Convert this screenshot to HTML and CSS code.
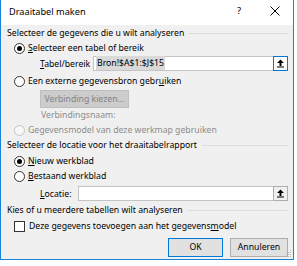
FILE: index.html
```html
<!DOCTYPE html>
<html lang="nl">
<head>
<meta charset="utf-8">
<title>Draaitabel maken</title>
<link rel="stylesheet" href="styles.css">
</head>
<body>
<div class="window">
  <div class="titlebar">
    <span class="title">Draaitabel maken</span>
    <span class="tb-btn help">?</span>
    <span class="tb-btn close"><svg width="10" height="10" viewBox="0 0 10 10"><path d="M0.5 0.5L9.5 9.5M9.5 0.5L0.5 9.5" stroke="#000" stroke-width="1"/></svg></span>
  </div>
  <div class="content">
    <div class="group-head h1"><span>Selecteer de gegevens die u wilt analyseren</span><i class="rule"></i></div>
    <div class="opt"><span class="radio checked"></span><span><u>S</u>electeer een tabel of bereik</span></div>
    <div class="field">
      <span class="flabel w-tabel"><u>T</u>abel/bereik</span>
      <div class="input"><span class="val"><span class="sel">Bron!$A$1:$J$15</span></span><span class="pick focus"><svg width="9" height="9" viewBox="0 0 9 9"><path d="M4.5 0.5L8 4H5.5V7H3.5V4H1Z" fill="#000"/><rect x="1" y="7.5" width="7" height="1" fill="#000"/></svg></span></div>
    </div>
    <div class="opt mt3"><span class="radio"></span><span>Een externe gegevensbron gebr<u>u</u>iken</span></div>
    <div class="btn-disabled">Verbinding kiezen...</div>
    <div class="sub disabled">Verbindingsnaam:</div>
    <div class="opt disabled"><span class="radio dis"></span><span>Gegevensmodel van deze werkmap gebruiken</span></div>
    <div class="group-head"><span>Selecteer de locatie voor het draaitabelrapport</span><i class="rule"></i></div>
    <div class="opt mt1"><span class="radio checked"></span><span><u>N</u>ieuw werkblad</span></div>
    <div class="opt"><span class="radio"></span><span><u>B</u>estaand werkblad</span></div>
    <div class="field mt2">
      <span class="flabel w-loc"><u>L</u>ocatie:</span>
      <div class="input"><span class="val"></span><span class="pick"><svg width="9" height="9" viewBox="0 0 9 9"><path d="M4.5 0.5L8 4H5.5V7H3.5V4H1Z" fill="#000"/><rect x="1" y="7.5" width="7" height="1" fill="#000"/></svg></span></div>
    </div>
    <div class="group-head mt2"><span>Kies of u meerdere tabellen wilt analyseren</span><i class="rule"></i></div>
    <div class="opt chk-row mt1"><span class="checkbox"></span><span>Deze gegevens toevoegen aan het gegevens<u>m</u>odel</span></div>
    <div class="actions">
      <span class="btn default">OK</span>
      <span class="btn cancel">Annuleren</span>
    </div>
  </div>
  <svg class="grip" width="8" height="8" viewBox="0 0 8 8"><g fill="#b8b8b8"><rect x="6" y="0" width="1" height="1"/><rect x="4" y="2" width="1" height="1"/><rect x="6" y="2" width="1" height="1"/><rect x="2" y="4" width="1" height="1"/><rect x="4" y="4" width="1" height="1"/><rect x="6" y="4" width="1" height="1"/><rect x="0" y="6" width="1" height="1"/><rect x="2" y="6" width="1" height="1"/><rect x="4" y="6" width="1" height="1"/><rect x="6" y="6" width="1" height="1"/></g></svg>
</div>
</body>
</html>
```

FILE: styles.css
```css
html, body {
  margin: 0;
  background: #ffffff;
}
body {
  font-family: "Noto Sans", "Open Sans", sans-serif;
  font-size: 8.7px;
  color: #000;
}
.window {
  position: relative;
  width: 294px;
  height: 260px;
  box-sizing: border-box;
  border: 1px solid #1883d7;
  border-top: 0;
  background: #f0f0f0;
  display: flex;
  flex-direction: column;
}
.titlebar {
  height: 25px;
  background: #fff;
  display: flex;
  align-items: center;
  padding-left: 8px;
  flex: none;
}
.title {
  flex: 1;
  font-size: 9.2px;
  margin-top: -3px;
}
.tb-btn {
  width: 36px;
  height: 25px;
  display: flex;
  align-items: center;
  justify-content: center;
}
.help {
  font-size: 9.5px;
  margin-top: -4px;
}
.close svg {
  display: block;
  margin-top: -4px;
}
.content {
  flex: 1;
  display: flex;
  flex-direction: column;
  padding: 0 5px 0 6px;
}
.group-head {
  display: flex;
  align-items: center;
  height: 15px;
  line-height: 15px;
  white-space: nowrap;
}
.group-head.h1 {
  height: 16px;
}
.rule {
  flex: 1;
  height: 1px;
  background: #dcdcdc;
  margin-left: 5px;
}
.opt {
  display: flex;
  align-items: center;
  gap: 3px;
  height: 15px;
  line-height: 15px;
  padding-left: 7px;
  white-space: nowrap;
}
.radio {
  width: 11px;
  height: 11px;
  box-sizing: border-box;
  border: 1px solid #333;
  border-radius: 50%;
  background: #fff;
  display: flex;
  align-items: center;
  justify-content: center;
  flex: none;
}
.radio.checked::after {
  content: "";
  width: 5px;
  height: 5px;
  border-radius: 50%;
  background: #000;
}
.radio.dis {
  border-color: #c4c4c4;
  background: #f7f7f7;
}
.disabled {
  color: #8c8c8c;
}
.checkbox {
  width: 11px;
  height: 11px;
  box-sizing: border-box;
  border: 1px solid #333;
  background: #fff;
  flex: none;
}
.chk-row {
  padding-left: 7px;
  gap: 4px;
}
.field {
  display: flex;
  align-items: center;
  height: 15px;
  padding-left: 33px;
}
.flabel {
  flex: none;
  white-space: nowrap;
}
.w-tabel { width: 53px; }
.w-loc { width: 38px; }
.input {
  flex: 1;
  height: 15px;
  box-sizing: border-box;
  border: 1px solid #c4c4c4;
  background: #fff;
  display: flex;
  align-items: stretch;
}
.val {
  flex: 1;
  padding-left: 2px;
  line-height: 13px;
  white-space: nowrap;
}
.sel {
  background: #d9d9d9;
  padding: 1px 1px;
}
.pick {
  width: 15px;
  box-sizing: border-box;
  border: 1px solid #adadad;
  background: #f0f0f0;
  display: flex;
  align-items: center;
  justify-content: center;
  margin: -1px -1px -1px 0;
  height: 15px;
}
.pick.focus {
  border-color: #0078d7;
  background: #fdfdfd;
}
.pick svg { display: block; }
.btn-disabled {
  margin: 1px 0 0 33px;
  width: 89px;
  height: 18px;
  box-sizing: border-box;
  border: 1px solid #bfbfbf;
  background: #cccccc;
  color: #838383;
  line-height: 16px;
  text-align: center;
  white-space: nowrap;
}
.sub {
  height: 15px;
  line-height: 15px;
  padding-left: 34px;
}
.mt1 { margin-top: 1px; }
.mt2 { margin-top: 2px; }
.mt3 { margin-top: 3px; }
.actions {
  display: flex;
  justify-content: flex-end;
  gap: 7px;
  margin-top: 4px;
}
.btn {
  height: 19px;
  box-sizing: border-box;
  border: 1px solid #adadad;
  background: #e1e1e1;
  line-height: 17px;
  text-align: center;
}
.btn.default {
  width: 55px;
  border-color: #0078d7;
}
.btn.cancel {
  width: 58px;
}
.grip {
  position: absolute;
  right: 1px;
  bottom: 1px;
}
```
